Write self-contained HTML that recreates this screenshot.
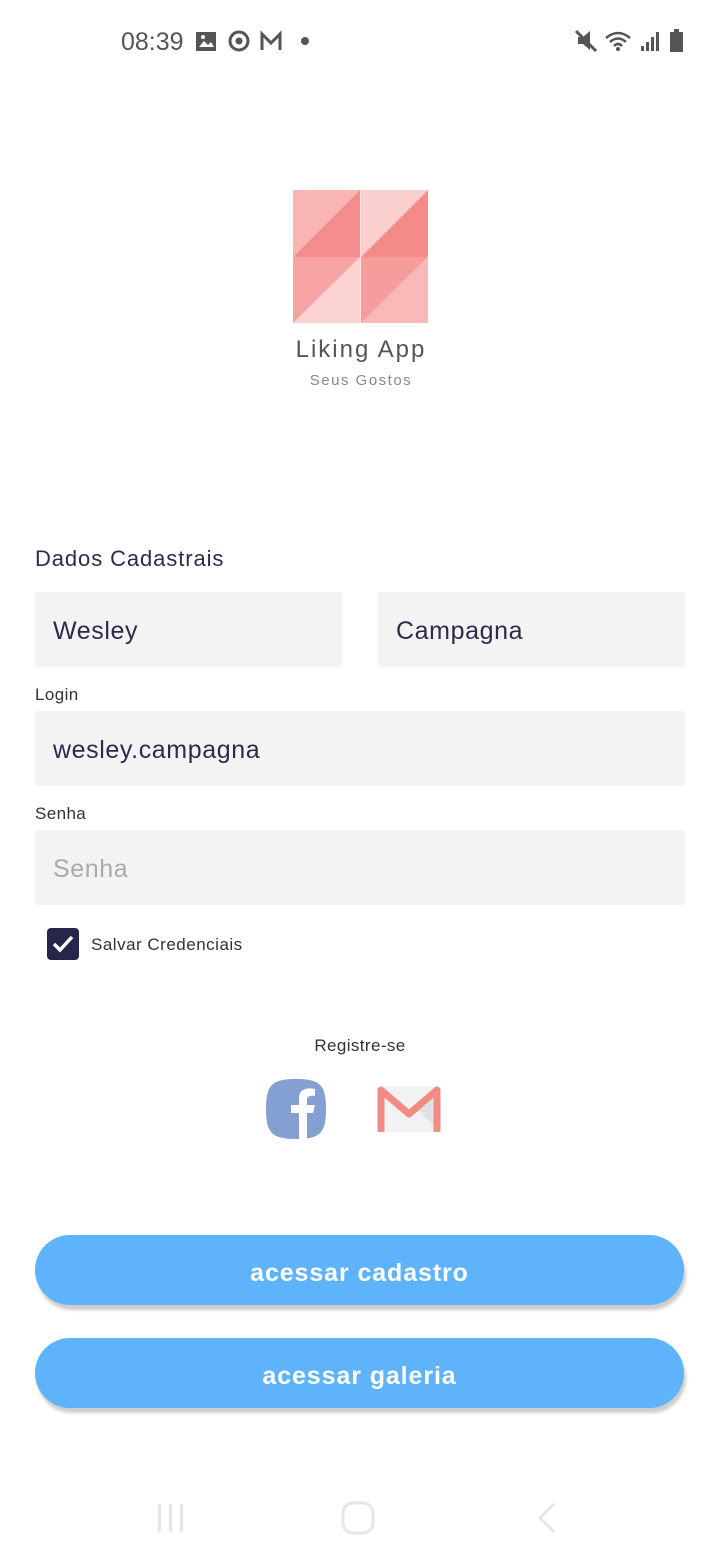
<!DOCTYPE html>
<html><head><meta charset="utf-8"><style>
*{margin:0;padding:0;box-sizing:border-box}
body{width:720px;height:1560px;background:#fff;font-family:"Liberation Sans",sans-serif;position:relative;overflow:hidden;color:#2b2b4a}
.abs{position:absolute}
.field{position:absolute;background:#f3f3f4;height:75px;font-size:25px;line-height:78px;padding-left:18px;color:#2b2b4a;letter-spacing:0.6px}
.lbl{position:absolute;font-size:17px;color:#333;letter-spacing:0.4px}
.btn{position:absolute;left:35px;width:649px;height:70px;border-radius:35px;background:#5eb3fb;color:#fff;font-weight:bold;font-size:25px;text-align:center;line-height:76px;letter-spacing:0.9px;box-shadow:2px 5px 3px rgba(0,0,0,0.2)}
</style></head><body>
<div class="abs" style="left:121px;top:28px;font-size:25px;color:#555">08:39</div>
<svg class="abs" style="left:195px;top:30px" width="125" height="24">
<rect x="1" y="2" width="20" height="19" fill="#555"/><path d="M4 17 L9 11 L13 15 L16 12 L19 17Z" fill="#fff"/><circle cx="8" cy="7" r="2" fill="#fff"/>
<circle cx="44" cy="11" r="9" fill="none" stroke="#555" stroke-width="3"/><circle cx="44" cy="11" r="3.5" fill="#555"/>
<path d="M67 20 V4 L76 13 L85 4 V20" fill="none" stroke="#555" stroke-width="3"/>
<circle cx="110" cy="11" r="4" fill="#555"/>
</svg>
<svg class="abs" style="left:574px;top:28px" width="114" height="26">
<path d="M4 9 H9 L16 3 V22 L9 16 H4Z" fill="#555"/><path d="M2 3 L22 23" stroke="#555" stroke-width="3"/>
<path d="M32 10 Q44 0 56 10 M36 14 Q44 7 52 14 M40 18 Q44 14 48 18" fill="none" stroke="#555" stroke-width="2.5"/><circle cx="44" cy="21" r="2" fill="#555"/>
<rect x="67" y="18" width="3" height="5" fill="#555"/><rect x="72" y="14" width="3" height="9" fill="#555"/><rect x="77" y="9" width="3" height="14" fill="#555"/><rect x="82" y="4" width="3" height="19" fill="#555"/>
<rect x="96" y="4" width="13" height="20" fill="#555"/><rect x="100" y="1" width="5" height="3" fill="#555"/>
</svg>
<svg class="abs" style="left:293px;top:190px" width="135" height="133">
<rect width="135" height="133" fill="#fde4e4"/>
<polygon points="0,0 67,0 0,67" fill="#f9b4b4"/>
<polygon points="67,0 0,67 67,67" fill="#f48d8d"/>
<polygon points="0,67 67,67 0,133" fill="#f7a3a3"/>
<polygon points="67,67 0,133 67,133" fill="#fcd3d3"/>
<polygon points="135,0 68,67 135,67" fill="#f48a8a"/>
<polygon points="68,0 135,0 68,67" fill="#fccfcf"/>
<polygon points="68,67 135,67 68,133" fill="#f69c9c"/>
<polygon points="135,67 68,133 135,133" fill="#f9b9b9"/>
</svg>
<div class="abs" style="left:285px;top:336px;width:152px;font-size:24px;color:#555;letter-spacing:2px;text-align:center">Liking App</div>
<div class="abs" style="left:285px;top:372px;width:152px;font-size:15px;color:#888;letter-spacing:1.5px;text-align:center">Seus Gostos</div>
<div class="abs" style="left:35px;top:546px;font-size:22px;color:#2b2b4a;letter-spacing:0.9px">Dados Cadastrais</div>
<div class="field" style="left:35px;top:592px;width:307px">Wesley</div>
<div class="field" style="left:378px;top:592px;width:307px">Campagna</div>
<div class="lbl" style="left:35px;top:685px">Login</div>
<div class="field" style="left:35px;top:711px;width:650px">wesley.campagna</div>
<div class="lbl" style="left:35px;top:804px">Senha</div>
<div class="field" style="left:35px;top:830px;width:650px;color:#aaa">Senha</div>
<div class="abs" style="left:47px;top:928px;width:32px;height:32px;border-radius:4px;background:#25264a"></div>
<svg class="abs" style="left:47px;top:928px" width="32" height="32"><path d="M7 16 L13 22 L25 9" fill="none" stroke="#fff" stroke-width="3.5"/></svg>
<div class="abs" style="left:91px;top:935px;font-size:17px;color:#333;letter-spacing:0.5px">Salvar Credenciais</div>
<div class="abs" style="left:0;top:1036px;width:720px;text-align:center;font-size:17px;color:#333;letter-spacing:0.4px">Registre-se</div>
<svg class="abs" style="left:265px;top:1078px" width="62" height="62">
<path d="M31 1 C55 1 61 7 61 31 C61 55 55 61 31 61 C7 61 1 55 1 31 C1 7 7 1 31 1Z" fill="#849fd2"/>
<path d="M34 61 V35 H26 V27 H34 V20 C34 12 40 9 50 11 V18 C44 17 42 19 42 22 V27 H50 L48 35 H42 V61Z" fill="#fff"/>
</svg>
<svg class="abs" style="left:376px;top:1084px" width="66" height="50">
<rect x="2" y="2" width="62" height="46" rx="4" fill="#f1f2f3"/>
<polygon points="40,24 64,48 64,6" fill="#dfe2e4"/>
<path d="M5 48 V6 L33 30 L61 6 V48" fill="none" stroke="#f28b82" stroke-width="7" stroke-linejoin="round"/>
</svg>
<div class="btn" style="top:1235px">acessar cadastro</div>
<div class="btn" style="top:1338px">acessar galeria</div>
<svg class="abs" style="left:150px;top:1500px" width="420" height="36">
<rect x="8" y="4" width="3" height="28" fill="#e6e6e6"/><rect x="19" y="4" width="3" height="28" fill="#e6e6e6"/><rect x="30" y="4" width="3" height="28" fill="#e6e6e6"/>
<rect x="193" y="3" width="30" height="30" rx="10" fill="none" stroke="#e6e6e6" stroke-width="3"/>
<path d="M404 4 L390 18 L404 32" fill="none" stroke="#e6e6e6" stroke-width="3"/>
</svg>
</body></html>
